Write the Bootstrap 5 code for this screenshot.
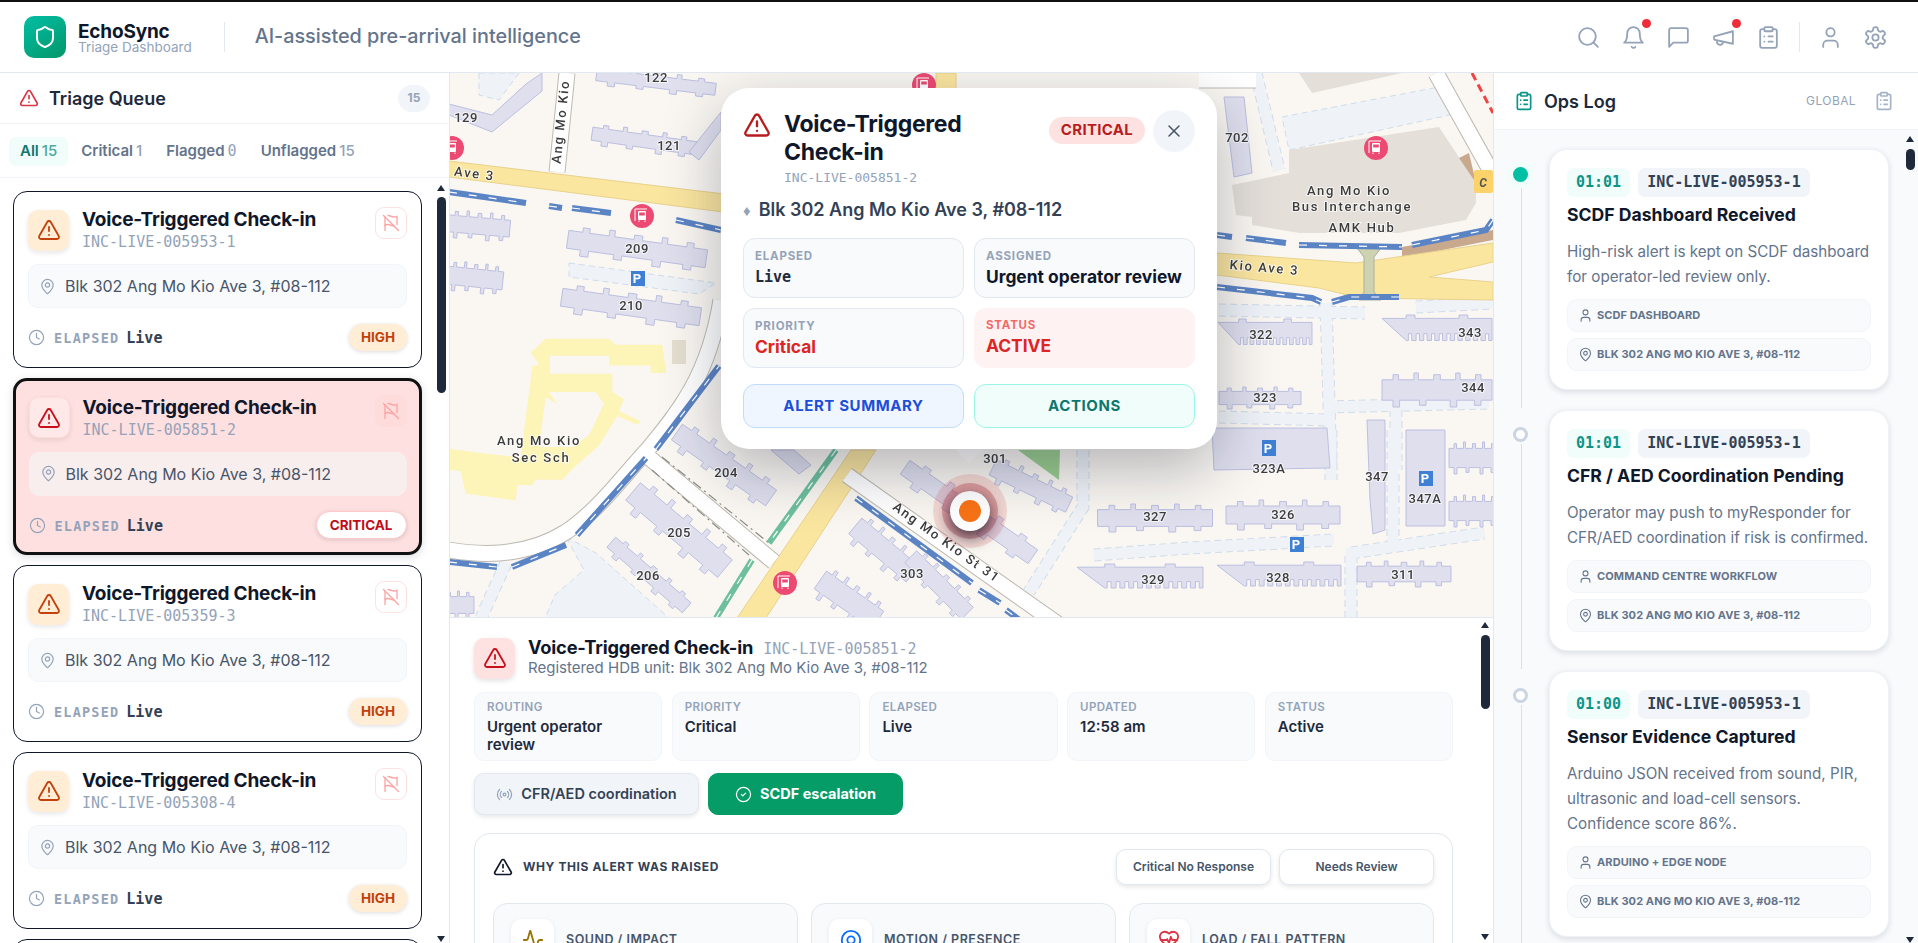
<!DOCTYPE html>
<html lang="en">
<head>
<meta charset="UTF-8">
<title>EchoSync Triage Dashboard</title>
<link href="https://cdn.jsdelivr.net/npm/bootstrap@5.3.0/dist/css/bootstrap.min.css" rel="stylesheet">
<style>
body{font-family:Inter,"Noto Sans",sans-serif;height:100vh;overflow:hidden;border-top:2px solid #111;color:#0f172a;background:#fff}
.mono{font-family:"DejaVu Sans Mono","Liberation Mono",monospace}
.ic{width:20px;height:20px;fill:none;stroke:currentColor;stroke-width:2;stroke-linecap:round;stroke-linejoin:round;flex:none}
.app-head{height:71px;border-bottom:1px solid #e2e8f0;padding:0 20px 0 24px;flex:none}
.logo-box{width:42px;height:42px;border-radius:10px;background:linear-gradient(145deg,#00bfa5,#059669);color:#fff}
.logo-box .ic{width:24px;height:24px}
.brand-name{font-size:19px;font-weight:700;line-height:17px;letter-spacing:-.2px;padding-top:2px}
.brand-sub{font-size:13.5px;line-height:14px;color:#94a3b8}
.head-rule{width:1px;height:30px;background:#e2e8f0}
.tagline{font-size:19.8px;font-weight:500;color:#64748b;margin-left:30px}
.head-btn{width:45px;color:#94a3b8}
.head-btn .ic{width:25px;height:25px;stroke-width:1.75}
.red-dot{position:absolute;top:-6px;right:5px;width:9px;height:9px;border-radius:50%;background:#ef2b3a}
.work{min-height:0}
.queue-pane{width:450px;flex:none;border-right:1px solid #e2e8f0}
.queue-head{height:51px;padding:0 19px;border-bottom:1px solid #f1f5f9;flex:none}
.queue-title{font-size:18px;font-weight:600;color:#1e293b;margin-left:2px}
.queue-count{width:32px;height:27px;margin-left:auto;background:#f1f5f9;color:#94a3b8;font-size:12px;font-weight:700;border-radius:14px}
.queue-tabs{height:54px;padding:1px 9px 0;gap:2px;border-bottom:1px solid #f1f5f9;flex:none}
.qtab{height:29px;padding:1px 11px 0;font-size:15px;font-weight:600;color:#64748b;border-radius:7px}
.qtab b{font-weight:500;color:#94a3b8;margin-left:3px}
.qtab.on{background:#f0fdfa;color:#0f766e}
.qtab.on b{color:#4fa9a0}
.pane-clip{overflow:hidden;min-height:0;position:relative}
.sbar{position:absolute;top:0;right:3px;bottom:0;width:9px}
.sbar-up,.sbar-down{position:absolute;left:0;border-left:4.5px solid transparent;border-right:4.5px solid transparent}
.sbar-up{border-bottom:6px solid #1e293b}
.sbar-down{border-top:6px solid #1e293b}
.sbar-thumb{position:absolute;left:0;width:9px;background:#1e293b;border-radius:5px}
.queue-list{padding:13px 27px 0 13px;flex:1}
.queue-list .sbar-up{top:7px}.queue-list .sbar-down{bottom:1px}.queue-list .sbar-thumb{top:19px;height:196px}
.detail .sbar-up{top:4px}.detail .sbar-down{bottom:3px}.detail .sbar-thumb{top:17px;height:74px}
.log-list .sbar-up{top:6px}.log-list .sbar-down{bottom:0}.log-list .sbar-thumb{top:19px;height:21px}
.qcard{height:177px;margin-bottom:10px;padding:16px 14px 0;border:1.5px solid #0f172a;border-radius:14px;background:#fff}
.qcard.sel{background:#ffe0e0;border:3px solid #111;padding:14.5px 12.5px 0;box-shadow:0 2px 8px rgba(15,23,42,.15)}
.q-icon{width:41px;height:41px;border-radius:10px;background:#ffedd5;color:#c2410c;box-shadow:0 2px 5px rgba(15,23,42,.1);flex:none;margin-top:1.5px;margin-right:5px}
.q-icon .ic{width:24px;height:24px;stroke-width:1.8}
.sel .q-icon{background:#ffe8e8;color:#c8101c;border:1px solid #fdd}
.q-title{font-size:19px;font-weight:700;line-height:24px;letter-spacing:-.2px;color:#0f172a;white-space:nowrap}
.q-id{font-size:15px;line-height:16px;color:#94a3b8;margin-top:2px}
.q-flag{width:32px;height:32px;border:1px solid #fee2e2;border-radius:9px;color:#fca5a5;margin-left:auto;margin-top:-1px;background:#fff;flex:none}
.sel .q-flag{background:#ffdcdc;border-color:#ffdcdc}
.q-flag .ic{width:18px;height:18px;stroke-width:1.8}
.q-loc{height:44px;margin-top:13.5px;padding:0 10px;background:#f8fafc;border:1px solid #f1f5f9;border-radius:10px;font-size:16px;color:#475569}
.sel .q-loc{background:#f9eeee;border-color:#f9eeee}
.q-loc .ic{width:17px;height:17px;color:#94a3b8;stroke-width:1.7;margin-right:9px}
.q-foot{margin-top:15.5px;height:28px}
.q-foot .ic{width:17px;height:17px;color:#94a3b8;stroke-width:1.7;margin-right:9px}
.q-el{font-size:13.5px;font-weight:700;letter-spacing:1.2px;color:#94a3b8;margin-right:7px;padding-top:2px}
.q-live{font-size:15px;font-weight:700;color:#334155;line-height:1;padding-top:2px}
.q-pill{margin-left:auto;height:27px;padding:0 12px;border-radius:14px;font-size:13.5px;font-weight:700;background:#ffedd5;color:#c2410c;box-shadow:0 1px 4px rgba(15,23,42,.15)}
.sel .q-pill{background:#fff;color:#c00d1a;border:1px solid #fecaca;height:28px;padding:0 13px}
.map-col{min-width:0}
.map-wrap{height:545px;flex:none;background:#faf7f2;overflow:hidden;border-bottom:1px solid #e2e8f0}
.map-svg{position:absolute;inset:0;width:1043px;height:545px;filter:blur(.35px)}
.bd{fill:#dfdfee;stroke:#bcbfe0;stroke-width:1}
.mt{font-family:Roboto,sans-serif;font-size:13px;font-weight:500;fill:#3c3c3c;paint-order:stroke;stroke:#fff;stroke-width:2px;stroke-opacity:.75;letter-spacing:.5px;text-anchor:middle}
.mt-w{letter-spacing:1.7px}
.pin-spot{position:absolute;left:500px;top:418px;width:40px;height:40px;border-radius:50%;background:#fff;box-shadow:0 6px 16px rgba(15,23,42,.8),0 0 0 8px rgba(190,40,50,.32),0 0 0 17px rgba(220,38,38,.14)}
.pin-core{width:22px;height:22px;border-radius:50%;background:#f97316}
.pop{position:absolute;left:271px;top:15px;width:496px;height:361px;padding:22px;background:#fff;border-radius:28px;box-shadow:0 20px 60px rgba(15,23,42,.3)}
.pop-tail{position:absolute;left:508px;top:364px;width:22px;height:22px;background:rgba(255,255,255,.7);transform:rotate(45deg)}
.pop-warn{width:28px;height:28px;color:#b91c1c;margin-top:1px}
.pop-head-text{margin-left:13px}
.pop-title{font-size:23px;font-weight:700;line-height:27.5px;letter-spacing:-.3px;width:200px;margin-top:1px}
.pop-id{font-size:13px;line-height:20px;color:#94a3b8;margin-top:2px}
.pop-badge{height:27px;padding:0 12px;margin-top:7px;border-radius:14px;background:#fee2e2;color:#b91c1c;font-size:15px;font-weight:700;letter-spacing:.3px}
.pop-close{width:42px;height:42px;border-radius:50%;background:#f1f5f9;color:#475569;border:0;padding:0}
.pop-close .ic{width:20px;height:20px;stroke-width:1.8}
.pop-addr{font-size:18px;font-weight:600;color:#334155;margin-top:10px;line-height:24px}
.pop-addr span{color:#94a3b8;font-size:15px;margin-right:8px}
.pop-grid{display:grid;grid-template-columns:1fr 1fr;gap:10px;margin-top:15px}
.pop-cell{height:60px;padding:9px 11px;border:1px solid #e2e8f0;background:#f8fafc;border-radius:12px}
.pop-cell.hot{background:#fef2f2;border-color:#fef2f2;padding-top:8px}
.pop-lab{font-size:11.5px;font-weight:700;letter-spacing:.8px;color:#94a3b8;line-height:16px;text-transform:uppercase}
.hot .pop-lab{color:#ee6b6b}
.pop-val{font-size:17.4px;font-weight:700;line-height:24px;margin-top:1px;white-space:nowrap}
.pop-val.mono{font-size:15px;font-weight:700;color:#1e293b}
.hot .pop-val,.pop-val.crit{color:#dc2626}
.pop-btns{display:grid;grid-template-columns:1fr 1fr;gap:10px;margin-top:16px}
.pop-btn{height:44px;border-radius:12px;font-size:15px;font-weight:700;letter-spacing:.6px;text-transform:uppercase;padding:0}
.btn-sum{background:#eff6ff;border:1px solid #bfdbfe;color:#1d4ed8}
.btn-act{background:#f0fdfa;border:1px solid #99f6e4;color:#0f766e}
.detail{flex:1;padding:19px 40px 0 24px}
.d-icon{width:41px;height:41px;border-radius:10px;background:#fee2e2;color:#c8101c;box-shadow:0 2px 5px rgba(15,23,42,.12);margin-right:13px;flex:none}
.d-icon .ic{width:24px;height:24px;stroke-width:1.8}
.d-title{font-size:18.3px;font-weight:700;line-height:20px;height:20px;letter-spacing:-.2px;white-space:nowrap}
.d-id{font-size:15px;line-height:1;color:#94a3b8;margin-left:10px;font-weight:400;letter-spacing:0}
.d-sub{font-size:15px;color:#64748b;line-height:22px;height:22px}
.d-stats{display:grid;grid-template-columns:repeat(5,1fr);gap:9.5px;margin-top:13px}
.d-stat{height:69px;padding:7px 12px;background:#f8fafc;border:1px solid #f1f5f9;border-radius:10px}
.d-lab{font-size:11.5px;font-weight:600;letter-spacing:.4px;color:#94a3b8;line-height:15px;text-transform:uppercase}
.d-val{font-size:15px;font-weight:600;color:#1e293b;line-height:18px;margin-top:3px}
.d-acts{gap:9px;margin-top:12px}
.d-btn{height:42px;border-radius:10px;font-size:14.5px;font-weight:600;padding:0;gap:8px}
.d-btn .ic{width:17px;height:17px;stroke-width:1.7}
.btn-cfr{width:225px;background:#f1f5f9;border:1px solid #e2e8f0;color:#334155;box-shadow:0 2px 4px rgba(15,23,42,.1)}
.btn-cfr .ic{color:#94a3b8}
.btn-scdf{width:195px;background:#059c67;border:1px solid #059c67;color:#fff;font-weight:700}
.why{margin-top:18px;padding:15px 18px;border:1px solid #e2e8f0;border-radius:16px;height:420px}
.why-title{font-size:12px;font-weight:700;letter-spacing:.6px;color:#334155;text-transform:uppercase;margin-left:2px}
.why-pill{width:155px;height:36px;border-radius:10px;background:#fff;border:1px solid #e2e8f0;box-shadow:0 2px 4px rgba(15,23,42,.1);font-size:12px;font-weight:600;color:#475569;padding:0}
.why-grid{display:grid;grid-template-columns:repeat(3,1fr);gap:13px;margin-top:18px}
.sens{height:220px;padding:15px 17px;background:#f8fafc;border:1px solid #e2e8f0;border-radius:14px}
.sens-ic{width:43px;height:42px;border-radius:10px;background:#fff;box-shadow:0 1px 4px rgba(15,23,42,.08)}
.sens-ic .ic{width:22px;height:22px}
.sens-lab{font-size:12.5px;font-weight:600;letter-spacing:.5px;color:#475569;text-transform:uppercase}
.log-pane{width:425px;flex:none;border-left:1px solid #e2e8f0}
.log-head{height:57px;padding:0 24px 0 20px;border-bottom:1px solid #f1f5f9;flex:none}
.log-title{font-size:18px;font-weight:600;color:#1e293b;margin-left:10px}
.log-global{font-size:12px;letter-spacing:.4px;color:#94a3b8;margin-left:auto;margin-right:18px}
.log-clip{color:#0d9488}
.log-clip-off{color:#a5b4c8}
.log-list{flex:1;background:#f8fafc;padding:19px 29px 0 55px}
.log-item{position:relative;padding-bottom:20px}
.log-item::before{content:"";position:absolute;left:-28.5px;top:34px;bottom:2px;width:1px;background:#d5e0ee}
.log-item:first-child::before{top:39px}
.log-dot{position:absolute;left:-36px;top:16.5px;width:15px;height:15px;border-radius:50%;background:#fff;border:3px solid #cbd5e1}
.log-dot.live{top:17.5px;background:#00bfa5;border:0;box-shadow:0 0 0 6px #f0fdfa}
.log-card{padding:18px 17px 18px;background:#fff;border:1px solid #eef2f7;border-radius:18px;box-shadow:0 2px 6px rgba(15,23,42,.13)}
.log-time,.log-inc{height:29px;padding:0 9px;font-size:15px;font-weight:700;border-radius:7px}
.log-time{background:#f0fdfa;color:#0d9488}
.log-inc{background:#f1f5f9;color:#334155}
.log-name{font-size:17.6px;font-weight:700;line-height:24px;margin-top:5.5px;color:#0f172a}
.log-text{font-size:15.2px;line-height:25px;color:#64748b;margin-top:12px}
.log-chip{height:33px;margin-top:6px;padding:0 10px;background:#f8fafc;border:1px solid #f1f5f9;border-radius:10px;font-size:11px;font-weight:700;letter-spacing:.1px;color:#64748b;text-transform:uppercase}
.log-text + .log-chip{margin-top:10.5px}
.log-chip .ic{width:15px;height:15px;stroke-width:1.7;margin-right:4px}
</style>
</head>
<body class="d-flex flex-column">

<svg class="d-none">
  <symbol id="i-shield" viewBox="0 0 24 24"><path d="M20 13c0 5-3.5 7.5-7.66 8.95a1 1 0 0 1-.67-.01C7.5 20.5 4 18 4 13V6a1 1 0 0 1 1-1c2 0 4.5-1.2 6.24-2.72a1.17 1.17 0 0 1 1.52 0C14.51 3.81 17 5 19 5a1 1 0 0 1 1 1z"/></symbol>
  <symbol id="i-search" viewBox="0 0 24 24"><circle cx="11" cy="11" r="8"/><path d="m21 21-4.3-4.3"/></symbol>
  <symbol id="i-bell" viewBox="0 0 24 24"><path d="M6 8a6 6 0 0 1 12 0c0 7 3 9 3 9H3s3-2 3-9"/><path d="M10.3 21a1.94 1.94 0 0 0 3.4 0"/></symbol>
  <symbol id="i-chat" viewBox="0 0 24 24"><path d="M21 15a2 2 0 0 1-2 2H7l-4 4V5a2 2 0 0 1 2-2h14a2 2 0 0 1 2 2z"/></symbol>
  <symbol id="i-mega" viewBox="0 0 24 24"><path d="m3 11 18-5v12L3 14v-3z"/><path d="M11.6 16.8a3 3 0 1 1-5.8-1.6"/></symbol>
  <symbol id="i-clip" viewBox="0 0 24 24"><rect x="8" y="2" width="8" height="4" rx="1"/><path d="M16 4h2a2 2 0 0 1 2 2v14a2 2 0 0 1-2 2H6a2 2 0 0 1-2-2V6a2 2 0 0 1 2-2h2"/><path d="M12 11h4"/><path d="M12 16h4"/><path d="M8 11h.01"/><path d="M8 16h.01"/></symbol>
  <symbol id="i-user" viewBox="0 0 24 24"><path d="M19 21v-2a4 4 0 0 0-4-4H9a4 4 0 0 0-4 4v2"/><circle cx="12" cy="7" r="4"/></symbol>
  <symbol id="i-gear" viewBox="0 0 24 24"><path d="M12.22 2h-.44a2 2 0 0 0-2 2v.18a2 2 0 0 1-1 1.73l-.43.25a2 2 0 0 1-2 0l-.15-.08a2 2 0 0 0-2.73.73l-.22.38a2 2 0 0 0 .73 2.73l.15.1a2 2 0 0 1 1 1.72v.51a2 2 0 0 1-1 1.74l-.15.09a2 2 0 0 0-.73 2.73l.22.38a2 2 0 0 0 2.73.73l.15-.08a2 2 0 0 1 2 0l.43.25a2 2 0 0 1 1 1.73V20a2 2 0 0 0 2 2h.44a2 2 0 0 0 2-2v-.18a2 2 0 0 1 1-1.73l.43-.25a2 2 0 0 1 2 0l.15.08a2 2 0 0 0 2.73-.73l.22-.39a2 2 0 0 0-.73-2.73l-.15-.08a2 2 0 0 1-1-1.74v-.5a2 2 0 0 1 1-1.74l.15-.09a2 2 0 0 0 .73-2.73l-.22-.38a2 2 0 0 0-2.73-.73l-.15.08a2 2 0 0 1-2 0l-.43-.25a2 2 0 0 1-1-1.73V4a2 2 0 0 0-2-2z"/><circle cx="12" cy="12" r="3"/></symbol>
  <symbol id="i-alert" viewBox="0 0 24 24"><path d="m21.73 18-8-14a2 2 0 0 0-3.48 0l-8 14A2 2 0 0 0 4 21h16a2 2 0 0 0 1.73-3"/><path d="M12 9v4"/><path d="M12 17h.01"/></symbol>
  <symbol id="i-flagoff" viewBox="0 0 24 24"><path d="M8 2c3 0 5 2 8 2s4-1 4-1v11"/><path d="M4 22V4"/><path d="M4 15s1-1 4-1 5 2 8 2"/><path d="m2 2 20 20"/></symbol>
  <symbol id="i-pin" viewBox="0 0 24 24"><path d="M20 10c0 4.993-5.539 10.193-7.399 11.799a1 1 0 0 1-1.202 0C9.539 20.193 4 14.993 4 10a8 8 0 0 1 16 0"/><circle cx="12" cy="10" r="3"/></symbol>
  <symbol id="i-clock" viewBox="0 0 24 24"><circle cx="12" cy="12" r="10"/><path d="M12 6v6l4 2"/></symbol>
  <symbol id="i-x" viewBox="0 0 24 24"><path d="M18 6 6 18"/><path d="m6 6 12 12"/></symbol>
  <symbol id="i-radio" viewBox="0 0 24 24"><path d="M4.9 19.1C1 15.2 1 8.8 4.9 4.9"/><path d="M7.8 16.2c-2.3-2.3-2.3-6.1 0-8.5"/><circle cx="12" cy="12" r="2"/><path d="M16.2 7.8c2.3 2.3 2.3 6.1 0 8.5"/><path d="M19.1 4.9C23 8.8 23 15.1 19.1 19"/></symbol>
  <symbol id="i-check" viewBox="0 0 24 24"><circle cx="12" cy="12" r="10"/><path d="m9 12 2 2 4-4"/></symbol>
  <symbol id="i-pulse" viewBox="0 0 24 24"><path d="M22 12h-2.48a2 2 0 0 0-1.93 1.46l-2.35 8.36a.25.25 0 0 1-.48 0L9.24 2.18a.25.25 0 0 0-.48 0l-2.35 8.36A2 2 0 0 1 4.49 12H2"/></symbol>
  <symbol id="i-target" viewBox="0 0 24 24"><circle cx="12" cy="12" r="10"/><circle cx="12" cy="12" r="4"/></symbol>
  <symbol id="i-heart" viewBox="0 0 24 24"><path d="M19 14c1.49-1.46 3-3.21 3-5.5A5.5 5.5 0 0 0 16.5 3c-1.76 0-3 .5-4.5 2-1.5-1.5-2.74-2-4.5-2A5.5 5.5 0 0 0 2 8.5c0 2.3 1.5 4.05 3 5.5l7 7Z"/><path d="M3.22 12H9.5l.5-1 2 4.5 2-7 1.5 3.5h5.27"/></symbol>
</svg>

<header class="app-head d-flex align-items-center">
  <div class="logo-box d-flex align-items-center justify-content-center"><svg class="ic"><use href="#i-shield"/></svg></div>
  <div class="ms-2 ps-1 me-4">
    <div class="brand-name">EchoSync</div>
    <div class="brand-sub">Triage Dashboard</div>
  </div>
  <div class="head-rule ms-2"></div>
  <div class="tagline">AI-assisted pre-arrival intelligence</div>
  <div class="ms-auto d-flex align-items-center">
    <div class="head-btn d-flex justify-content-center"><svg class="ic"><use href="#i-search"/></svg></div>
    <div class="head-btn d-flex justify-content-center position-relative"><svg class="ic"><use href="#i-bell"/></svg><span class="red-dot"></span></div>
    <div class="head-btn d-flex justify-content-center"><svg class="ic"><use href="#i-chat"/></svg></div>
    <div class="head-btn d-flex justify-content-center position-relative"><svg class="ic"><use href="#i-mega"/></svg><span class="red-dot"></span></div>
    <div class="head-btn d-flex justify-content-center"><svg class="ic"><use href="#i-clip"/></svg></div>
    <div class="head-rule mx-2"></div>
    <div class="head-btn d-flex justify-content-center"><svg class="ic"><use href="#i-user"/></svg></div>
    <div class="head-btn d-flex justify-content-center"><svg class="ic"><use href="#i-gear"/></svg></div>
  </div>
</header>

<div class="work d-flex flex-grow-1">

  <aside class="queue-pane d-flex flex-column">
    <div class="queue-head d-flex align-items-center gap-2">
      <svg class="ic text-danger"><use href="#i-alert"/></svg>
      <div class="queue-title">Triage Queue</div>
      <div class="queue-count d-flex align-items-center justify-content-center">15</div>
    </div>
    <div class="queue-tabs d-flex align-items-center">
      <div class="qtab on d-flex align-items-center">All<b>15</b></div>
      <div class="qtab d-flex align-items-center">Critical<b>1</b></div>
      <div class="qtab d-flex align-items-center">Flagged<b class="mono">0</b></div>
      <div class="qtab d-flex align-items-center">Unflagged<b>15</b></div>
    </div>
    <div class="queue-list pane-clip">

      <div class="qcard">
        <div class="d-flex gap-2"><div class="q-icon d-flex align-items-center justify-content-center"><svg class="ic"><use href="#i-alert"/></svg></div>
          <div><div class="q-title">Voice-Triggered Check-in</div><div class="q-id mono">INC-LIVE-005953-1</div></div>
          <div class="q-flag d-flex align-items-center justify-content-center"><svg class="ic"><use href="#i-flagoff"/></svg></div></div>
        <div class="q-loc d-flex align-items-center"><svg class="ic"><use href="#i-pin"/></svg>Blk 302 Ang Mo Kio Ave 3, #08-112</div>
        <div class="q-foot d-flex align-items-center"><svg class="ic"><use href="#i-clock"/></svg><span class="q-el mono">ELAPSED</span><span class="q-live mono">Live</span><span class="q-pill d-flex align-items-center">HIGH</span></div>
      </div>

      <div class="qcard sel">
        <div class="d-flex gap-2"><div class="q-icon d-flex align-items-center justify-content-center"><svg class="ic"><use href="#i-alert"/></svg></div>
          <div><div class="q-title">Voice-Triggered Check-in</div><div class="q-id mono">INC-LIVE-005851-2</div></div>
          <div class="q-flag d-flex align-items-center justify-content-center"><svg class="ic"><use href="#i-flagoff"/></svg></div></div>
        <div class="q-loc d-flex align-items-center"><svg class="ic"><use href="#i-pin"/></svg>Blk 302 Ang Mo Kio Ave 3, #08-112</div>
        <div class="q-foot d-flex align-items-center"><svg class="ic"><use href="#i-clock"/></svg><span class="q-el mono">ELAPSED</span><span class="q-live mono">Live</span><span class="q-pill d-flex align-items-center">CRITICAL</span></div>
      </div>

      <div class="qcard">
        <div class="d-flex gap-2"><div class="q-icon d-flex align-items-center justify-content-center"><svg class="ic"><use href="#i-alert"/></svg></div>
          <div><div class="q-title">Voice-Triggered Check-in</div><div class="q-id mono">INC-LIVE-005359-3</div></div>
          <div class="q-flag d-flex align-items-center justify-content-center"><svg class="ic"><use href="#i-flagoff"/></svg></div></div>
        <div class="q-loc d-flex align-items-center"><svg class="ic"><use href="#i-pin"/></svg>Blk 302 Ang Mo Kio Ave 3, #08-112</div>
        <div class="q-foot d-flex align-items-center"><svg class="ic"><use href="#i-clock"/></svg><span class="q-el mono">ELAPSED</span><span class="q-live mono">Live</span><span class="q-pill d-flex align-items-center">HIGH</span></div>
      </div>

      <div class="qcard">
        <div class="d-flex gap-2"><div class="q-icon d-flex align-items-center justify-content-center"><svg class="ic"><use href="#i-alert"/></svg></div>
          <div><div class="q-title">Voice-Triggered Check-in</div><div class="q-id mono">INC-LIVE-005308-4</div></div>
          <div class="q-flag d-flex align-items-center justify-content-center"><svg class="ic"><use href="#i-flagoff"/></svg></div></div>
        <div class="q-loc d-flex align-items-center"><svg class="ic"><use href="#i-pin"/></svg>Blk 302 Ang Mo Kio Ave 3, #08-112</div>
        <div class="q-foot d-flex align-items-center"><svg class="ic"><use href="#i-clock"/></svg><span class="q-el mono">ELAPSED</span><span class="q-live mono">Live</span><span class="q-pill d-flex align-items-center">HIGH</span></div>
      </div>

      <div class="qcard"></div>
      <div class="sbar"><span class="sbar-up"></span><span class="sbar-thumb"></span><span class="sbar-down"></span></div>
    </div>
  </aside>

  <main class="map-col d-flex flex-column flex-grow-1">
    <div class="map-wrap position-relative">
      <svg class="map-svg" viewBox="451 73 1043 545">
        <defs>
          <path id="b1" vector-effect="non-scaling-stroke" d="M-50-6h10v-3h5v3h14v-4h4v4h14v-3h6v3h14v-4h4v4h14v-3h5v3h10v12h-10v3h-6v-3h-16v4h-6v-4h-22v3h-6v-3h-18v4h-6v-4h-10z"/>
          <path id="b2" vector-effect="non-scaling-stroke" d="M-50-8h22v-2h8v2h40v-2h8v2h22v13h-3v-4h-3v4h-4v-4h-3v4h-4v-4h-3v4h-4v-4h-3v4h-4v-4h-3v4h-4v-4h-3v4h-4v-4h-3v4h-4v-4h-3v4h-4v-4h-3v4h-4v-4h-3v4h-4v-4h-3v4h-2z"/>
          <path id="lanes" d="M450 192L527 203M550 206L563 208M573 208L612 213M677 220L722 230M1218 235L1233 237M1247 238L1287 243M1300 245L1403 247M1413 245L1487 230L1494 220M1218 287L1313 298L1322 302M1333 302L1350 297L1400 297M450 562L498 567M513 567L567 545M578 535L647 458M657 449L720 366M857 498L973 583M980 590L1001 603M1007 610L1022 621"/>
          <path id="greens" d="M837 450L770 543M753 560L717 618"/>
          <path id="foot" d="M1084 450V507L1030 592M1095 555L1190 548L1335 540M1352 618V553L1485 533M1394 430V550M1332 430V480M1327 303L1332 470M1327 407L1490 403M1220 310L1366 313M1417 307L1494 303M1220 417L1330 420M1397 410V470M1257 73L1280 170M507 563L482 618"/>
          <path id="roads" d="M450 550C490 557 530 555 567 532C600 510 625 475 650 448C680 412 710 375 722 300M647 455L775 562M848 475L1070 632M568 73L558 172M1437 73L1494 175M1200 80H1257"/>
          <g id="bus">
            <circle r="12" fill="#ec4a73"/>
            <rect x="-4" y="-5" width="8" height="9" rx="1" fill="#fff"/>
            <rect x="-2.8" y="-3.5" width="5.6" height="3" fill="#ec4a73"/>
            <path d="M-3 4.5v1.5M3 4.5v1.5M-7-7H5M-7-7V5" fill="none" stroke="#fff" stroke-width="1"/>
          </g>
        </defs>
        <rect x="451" y="73" width="1043" height="545" fill="#faf7f2"/>

        <path fill="#eff3f8" stroke="#cfdceb" stroke-dasharray="6 4" d="M570 263L717 283L700 294L570 277zM1283 117L1440 87L1460 113L1290 150zM567 537L597 553L670 618H546L556 595L585 570zM480 73H520L500 100L480 95z"/>
        <use href="#foot" fill="none" stroke="#cfdceb" stroke-width="13" stroke-dasharray="7 4"/>
        <use href="#foot" fill="none" stroke="#eff3f8" stroke-width="11"/>

        <path fill="#e4dfd9" d="M1233 185L1290 173V150L1440 127L1477 183V203L1467 220L1400 233H1300L1253 225V217L1237 215zM1300 73H1403L1313 93z"/>
        <path fill="#c9a98e" d="M1460 158L1470 153L1477 183zM1403 247L1494 230V240L1403 258z"/>
        <path fill="#9ccf90" d="M1019 450H1061L1060 480z"/>
        <path fill="#e4dfd0" d="M673 340H687V364H673z"/>
        <path fill="#fdf4b8" fill-rule="evenodd" transform="translate(450 70) scale(.3333 .3444)" d="M245 820L290 780H480L500 798H640L652 880H605V858H480V830H303V882H490V935L525 955L510 990L575 1020L565 1030L505 1005L450 1090L380 1150L340 1190H260L250 1205H205L200 1250L50 1230L35 1165L0 1160V1100L120 1115L215 1125L250 860L270 855zM290 950L325 970L300 935H440L465 970L420 1060L370 1095H270z"/>

        <path fill="#fbe6a0" stroke="#e8d28c" d="M450 161L1218 253L1357 263L1494 243V262L1430 277L1494 282V300L1360 298L1320 288L450 177z"/>
        <path fill="#fbe6a0" stroke="#e8d28c" d="M852 450H877L767 618H738zM937 73H957V90H937z"/>
        <path fill="#cfd2b0" stroke="#aab0a0" d="M1358 248H1382L1375 257V292L1382 300H1360L1365 292V257z"/>

        <use href="#roads" fill="none" stroke="#bdb9b0" stroke-width="17"/>
        <use href="#roads" fill="none" stroke="#fff" stroke-width="15"/>
        <path fill="none" stroke="#8b8b85" stroke-width="1.2" stroke-dasharray="10 4 2 4" d="M663 457L770 543M653 470L750 555"/>
        <use href="#lanes" fill="none" stroke="#5b84c4" stroke-width="6"/>
        <use href="#lanes" fill="none" stroke="#fff" stroke-width="1.2" stroke-dasharray="8 12"/>
        <use href="#greens" fill="none" stroke="#6dbf9e" stroke-width="6"/>
        <use href="#greens" fill="none" stroke="#fff" stroke-width="1.2" stroke-dasharray="8 12"/>
        <path fill="none" stroke="#ef4444" stroke-width="3" stroke-dasharray="8 5" d="M1473 73L1494 113"/>

        <g class="bd">
          <use href="#b1" transform="translate(657 82) rotate(7) scale(1.2 1)"/>
          <use href="#b1" transform="translate(645 141) rotate(8) scale(1.05 1.1)"/>
          <path d="M690 152L722 112V130L700 160z"/>
          <path d="M450 104L493 115L527 84L543 73V91L493 132L450 115z"/>
          <use href="#b1" transform="translate(480 226) rotate(5) scale(.62 1.4)"/>
          <use href="#b1" transform="translate(476 278) rotate(6) scale(.56 1.5)"/>
          <use href="#b1" transform="translate(638 249) rotate(8) scale(1.4 1.5)"/>
          <use href="#b1" transform="translate(632 307) rotate(8) scale(1.4 1.5)"/>
          <use href="#b1" transform="translate(725 465) rotate(35) scale(1.15 1.6)"/>
          <use href="#b1" transform="translate(680 530) rotate(40) scale(1.2 1.9)"/>
          <use href="#b1" transform="translate(650 575) rotate(41) scale(1 1.1)"/>
          <path d="M772 450H795L812 465L800 474z"/>
          <use href="#b1" transform="translate(1032 486) rotate(26) scale(.85 1.4)"/>
          <use href="#b1" transform="translate(970 512) rotate(35) scale(1.56 1.4)"/>
          <use href="#b1" transform="translate(885 550) rotate(40) scale(.75 1.7)"/>
          <use href="#b1" transform="translate(850 600) rotate(35) scale(.7 1.8)"/>
          <use href="#b1" transform="translate(940 585) rotate(45) scale(.8 1.4)"/>
          <use href="#b1" transform="translate(450 605) scale(.5 1.4)"/>
          <use href="#b1" transform="translate(1156 518) scale(1.15 1.4)"/>
          <use href="#b1" transform="translate(1284 515) scale(1.14 1.5)"/>
          <use href="#b2" transform="translate(1141 580) scale(1.26 1.6)"/>
          <use href="#b2" transform="translate(1280 578) scale(1.24 1.6)"/>
          <use href="#b1" transform="translate(1405 574) scale(.94 1.3)"/>
          <path d="M1213 428H1328L1331 468L1215 470z"/>
          <path d="M1368 420H1386V530L1374 534L1371 500z"/>
          <path d="M1407 430H1446V526H1407z"/>
          <use href="#b1" transform="translate(1475 458) scale(.5 1.6)"/>
          <use href="#b1" transform="translate(1475 511) scale(.5 1.6)"/>
          <path d="M1225 97H1245L1253 173L1235 177z"/>
          <use href="#b2" transform="translate(1266 336) scale(.94 1.7)"/>
          <use href="#b1" transform="translate(1261 398) scale(.82 1.1)"/>
          <use href="#b2" transform="translate(1438 332) scale(1.1 1.7)"/>
          <use href="#b1" transform="translate(1438 390) scale(1.1 1.7)"/>
        </g>

        <g fill="#3f7fd4">
          <rect x="632" y="271" width="14" height="15"/><rect x="1263" y="440" width="14" height="16"/>
          <rect x="1420" y="471" width="14" height="15"/><rect x="1291" y="537" width="14" height="15"/>
        </g>
        <g fill="#fff" font-family="Roboto,sans-serif" font-size="13" font-weight="700" text-anchor="middle">
          <text x="638" y="283">P</text><text x="1269" y="453">P</text><text x="1426" y="483">P</text><text x="1297" y="549">P</text>
        </g>

        <use href="#bus" x="643" y="216"/><use href="#bus" x="453" y="148"/><use href="#bus" x="1377" y="148"/><use href="#bus" x="786" y="583"/><use href="#bus" x="925" y="85"/>

        <rect x="1475" y="170" width="19" height="23" rx="2" fill="#fcd26a"/>
        <text x="1484" y="187" font-family="Roboto,sans-serif" font-size="12" font-weight="700" font-style="italic" fill="#555" text-anchor="middle">C</text>

        <g>
          <text class="mt" x="467" y="122">129</text><text class="mt" x="657" y="82">122</text><text class="mt" x="670" y="150">121</text>
          <text class="mt" x="638" y="253">209</text><text class="mt" x="632" y="310">210</text>
          <text class="mt" x="727" y="477">204</text><text class="mt" x="680" y="537">205</text><text class="mt" x="649" y="580">206</text>
          <text class="mt" x="996" y="463">301</text><text class="mt" x="913" y="578">303</text>
          <text class="mt" x="1156" y="521">327</text><text class="mt" x="1284" y="519">326</text><text class="mt" x="1154" y="584">329</text><text class="mt" x="1279" y="582">328</text><text class="mt" x="1404" y="579">311</text>
          <text class="mt" x="1270" y="473">323A</text><text class="mt" x="1378" y="481">347</text><text class="mt" x="1426" y="503">347A</text>
          <text class="mt" x="1238" y="142">702</text><text class="mt" x="1262" y="339">322</text><text class="mt" x="1266" y="402">323</text><text class="mt" x="1471" y="337">343</text><text class="mt" x="1474" y="392">344</text>
          <text class="mt mt-w" x="540" y="445">Ang Mo Kio</text><text class="mt mt-w" x="542" y="462">Sec Sch</text>
          <text class="mt mt-w" x="1350" y="195">Ang Mo Kio</text><text class="mt mt-w" x="1353" y="211">Bus Interchange</text><text class="mt mt-w" x="1363" y="232">AMK Hub</text>
          <text class="mt mt-w" transform="translate(475 178) rotate(7)">Ave 3</text>
          <text class="mt mt-w" transform="translate(1265 272) rotate(5)">Kio Ave 3</text>
          <text class="mt mt-w" transform="translate(566 122) rotate(-84)">Ang Mo Kio</text>
          <text class="mt mt-w" transform="translate(945 546) rotate(35.5)">Ang Mo Kio St 31</text>
        </g>
      </svg>

      <div class="pin-spot d-flex align-items-center justify-content-center"><div class="pin-core"></div></div>
      <div class="pop-tail"></div>
      <div class="pop">
        <div class="d-flex">
          <svg class="ic pop-warn"><use href="#i-alert"/></svg>
          <div class="pop-head-text flex-grow-1">
            <div class="pop-title">Voice-Triggered Check-in</div>
            <div class="pop-id mono">INC-LIVE-005851-2</div>
          </div>
          <div class="pop-badge d-flex align-items-center">CRITICAL</div>
          <button class="pop-close d-flex align-items-center justify-content-center ms-2" type="button"><svg class="ic"><use href="#i-x"/></svg></button>
        </div>
        <div class="pop-addr"><span>♦</span>Blk 302 Ang Mo Kio Ave 3, #08-112</div>
        <div class="pop-grid">
          <div class="pop-cell"><div class="pop-lab">Elapsed</div><div class="pop-val mono">Live</div></div>
          <div class="pop-cell"><div class="pop-lab">Assigned</div><div class="pop-val">Urgent operator review</div></div>
          <div class="pop-cell"><div class="pop-lab">Priority</div><div class="pop-val crit">Critical</div></div>
          <div class="pop-cell hot"><div class="pop-lab">Status</div><div class="pop-val">ACTIVE</div></div>
        </div>
        <div class="pop-btns">
          <button class="btn pop-btn btn-sum" type="button">Alert Summary</button>
          <button class="btn pop-btn btn-act" type="button">Actions</button>
        </div>
      </div>
    </div>

    <div class="detail pane-clip">
      <div class="d-flex align-items-center">
        <div class="d-icon d-flex align-items-center justify-content-center"><svg class="ic"><use href="#i-alert"/></svg></div>
        <div>
          <div class="d-title">Voice-Triggered Check-in<span class="d-id mono">INC-LIVE-005851-2</span></div>
          <div class="d-sub">Registered HDB unit: Blk 302 Ang Mo Kio Ave 3, #08-112</div>
        </div>
      </div>
      <div class="d-stats">
        <div class="d-stat"><div class="d-lab">Routing</div><div class="d-val">Urgent operator review</div></div>
        <div class="d-stat"><div class="d-lab">Priority</div><div class="d-val">Critical</div></div>
        <div class="d-stat"><div class="d-lab">Elapsed</div><div class="d-val">Live</div></div>
        <div class="d-stat"><div class="d-lab">Updated</div><div class="d-val">12:58 am</div></div>
        <div class="d-stat"><div class="d-lab">Status</div><div class="d-val">Active</div></div>
      </div>
      <div class="d-acts d-flex">
        <button class="btn d-btn btn-cfr d-flex align-items-center justify-content-center" type="button"><svg class="ic"><use href="#i-radio"/></svg>CFR/AED coordination</button>
        <button class="btn d-btn btn-scdf d-flex align-items-center justify-content-center" type="button"><svg class="ic"><use href="#i-check"/></svg>SCDF escalation</button>
      </div>
      <div class="why">
        <div class="d-flex align-items-center">
          <svg class="ic me-2"><use href="#i-alert"/></svg>
          <div class="why-title">Why this alert was raised</div>
          <div class="ms-auto d-flex gap-2">
            <button class="why-pill" type="button">Critical No Response</button>
            <button class="why-pill" type="button">Needs Review</button>
          </div>
        </div>
        <div class="why-grid">
          <div class="sens"><div class="d-flex align-items-center gap-2"><div class="sens-ic d-flex align-items-center justify-content-center me-1 text-warning-emphasis"><svg class="ic"><use href="#i-pulse"/></svg></div><div class="sens-lab">Sound / Impact</div></div></div>
          <div class="sens"><div class="d-flex align-items-center gap-2"><div class="sens-ic d-flex align-items-center justify-content-center me-1 text-primary"><svg class="ic"><use href="#i-target"/></svg></div><div class="sens-lab">Motion / Presence</div></div></div>
          <div class="sens"><div class="d-flex align-items-center gap-2"><div class="sens-ic d-flex align-items-center justify-content-center me-1 text-danger"><svg class="ic"><use href="#i-heart"/></svg></div><div class="sens-lab">Load / Fall Pattern</div></div></div>
        </div>
      </div>
      <div class="sbar"><span class="sbar-up"></span><span class="sbar-thumb"></span><span class="sbar-down"></span></div>
    </div>
  </main>

  <aside class="log-pane d-flex flex-column">
    <div class="log-head d-flex align-items-center">
      <svg class="ic log-clip"><use href="#i-clip"/></svg>
      <div class="log-title">Ops Log</div>
      <div class="log-global">GLOBAL</div>
      <svg class="ic log-clip-off"><use href="#i-clip"/></svg>
    </div>
    <div class="log-list pane-clip">
      <div class="log-item">
        <span class="log-dot live"></span>
        <div class="log-card">
          <div class="d-flex gap-2"><span class="log-time mono d-flex align-items-center">01:01</span><span class="log-inc mono d-flex align-items-center">INC-LIVE-005953-1</span></div>
          <div class="log-name">SCDF Dashboard Received</div>
          <div class="log-text">High-risk alert is kept on SCDF dashboard for operator-led review only.</div>
          <div class="log-chip d-flex align-items-center"><svg class="ic"><use href="#i-user"/></svg>SCDF Dashboard</div>
          <div class="log-chip d-flex align-items-center"><svg class="ic"><use href="#i-pin"/></svg>Blk 302 Ang Mo Kio Ave 3, #08-112</div>
        </div>
      </div>
      <div class="log-item">
        <span class="log-dot"></span>
        <div class="log-card">
          <div class="d-flex gap-2"><span class="log-time mono d-flex align-items-center">01:01</span><span class="log-inc mono d-flex align-items-center">INC-LIVE-005953-1</span></div>
          <div class="log-name">CFR / AED Coordination Pending</div>
          <div class="log-text">Operator may push to myResponder for CFR/AED coordination if risk is confirmed.</div>
          <div class="log-chip d-flex align-items-center"><svg class="ic"><use href="#i-user"/></svg>Command Centre Workflow</div>
          <div class="log-chip d-flex align-items-center"><svg class="ic"><use href="#i-pin"/></svg>Blk 302 Ang Mo Kio Ave 3, #08-112</div>
        </div>
      </div>
      <div class="log-item">
        <span class="log-dot"></span>
        <div class="log-card">
          <div class="d-flex gap-2"><span class="log-time mono d-flex align-items-center">01:00</span><span class="log-inc mono d-flex align-items-center">INC-LIVE-005953-1</span></div>
          <div class="log-name">Sensor Evidence Captured</div>
          <div class="log-text">Arduino JSON received from sound, PIR, ultrasonic and load-cell sensors. Confidence score 86%.</div>
          <div class="log-chip d-flex align-items-center"><svg class="ic"><use href="#i-user"/></svg>Arduino + Edge Node</div>
          <div class="log-chip d-flex align-items-center"><svg class="ic"><use href="#i-pin"/></svg>Blk 302 Ang Mo Kio Ave 3, #08-112</div>
        </div>
      </div>
      <div class="sbar"><span class="sbar-up"></span><span class="sbar-thumb"></span><span class="sbar-down"></span></div>
    </div>
  </aside>
</div>

<script src="https://cdn.jsdelivr.net/npm/bootstrap@5.3.0/dist/js/bootstrap.bundle.min.js"></script>
</body>
</html>
